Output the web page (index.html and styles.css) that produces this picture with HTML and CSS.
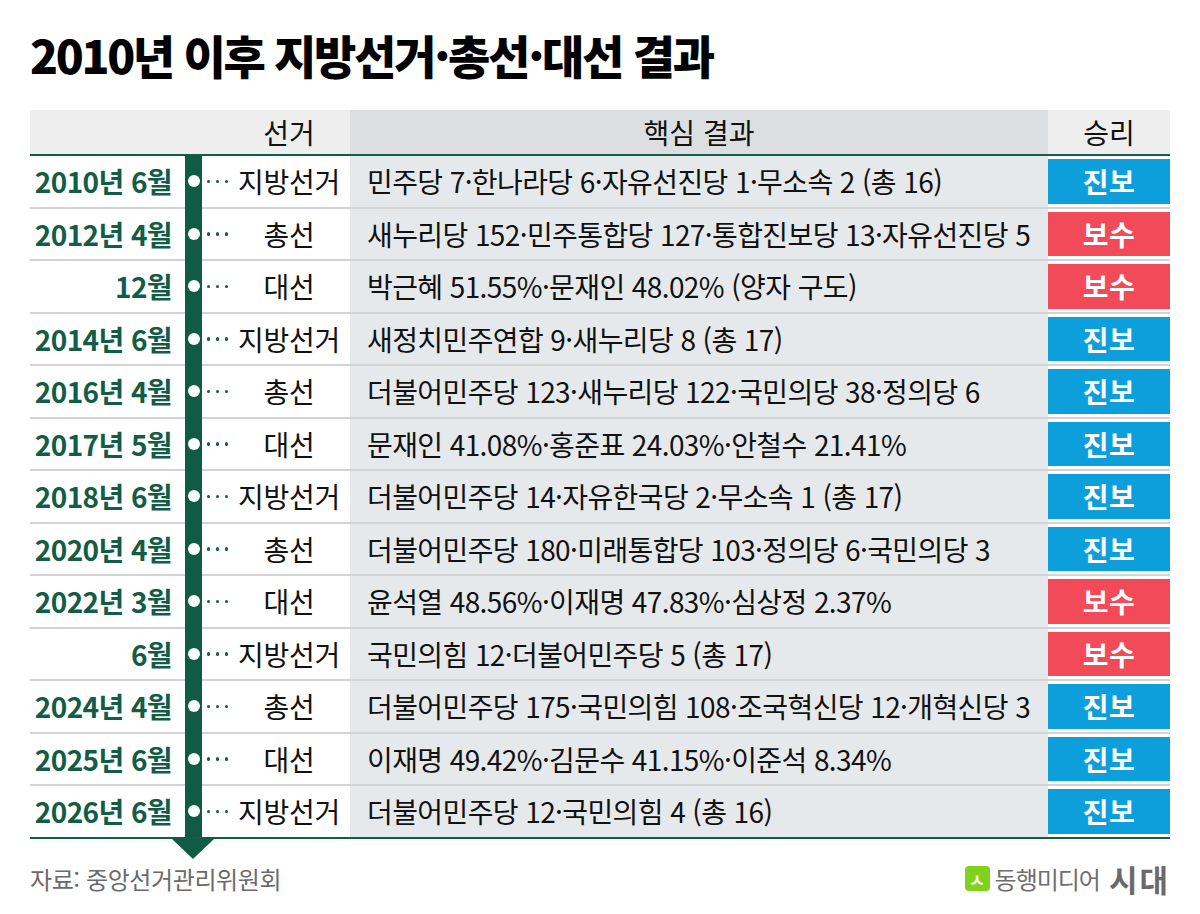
FILE: index.html
```html
<!DOCTYPE html>
<html lang="ko">
<head>
<meta charset="utf-8">
<title>2010년 이후 지방선거·총선·대선 결과</title>
<link rel="stylesheet" href="styles.css">
</head>
<body>
<div class="page">
  <h1 class="title">2010년 이후 지방선거·총선·대선 결과</h1>
  <div class="table">
    <div class="row head">
      <div class="hc side span3"></div>
      <div class="hc side">선거</div>
      <div class="hc mid">핵심 결과</div>
      <div class="hc side">승리</div>
    </div>

    <div class="row"><div class="date">2010년 6월</div><div class="bar"><i class="dot"></i></div><div class="dots"><i></i><i></i><i></i></div><div class="type">지방선거</div><div class="res">민주당 7·한나라당 6·자유선진당 1·무소속 2 (총 16)</div><div class="win"><span class="badge blue">진보</span></div></div>
    <div class="row"><div class="date">2012년 4월</div><div class="bar"><i class="dot"></i></div><div class="dots"><i></i><i></i><i></i></div><div class="type">총선</div><div class="res">새누리당 152·민주통합당 127·통합진보당 13·자유선진당 5</div><div class="win"><span class="badge red">보수</span></div></div>
    <div class="row"><div class="date">12월</div><div class="bar"><i class="dot"></i></div><div class="dots"><i></i><i></i><i></i></div><div class="type">대선</div><div class="res">박근혜 51.55%·문재인 48.02% (양자 구도)</div><div class="win"><span class="badge red">보수</span></div></div>
    <div class="row"><div class="date">2014년 6월</div><div class="bar"><i class="dot"></i></div><div class="dots"><i></i><i></i><i></i></div><div class="type">지방선거</div><div class="res">새정치민주연합 9·새누리당 8 (총 17)</div><div class="win"><span class="badge blue">진보</span></div></div>
    <div class="row"><div class="date">2016년 4월</div><div class="bar"><i class="dot"></i></div><div class="dots"><i></i><i></i><i></i></div><div class="type">총선</div><div class="res">더불어민주당 123·새누리당 122·국민의당 38·정의당 6</div><div class="win"><span class="badge blue">진보</span></div></div>
    <div class="row"><div class="date">2017년 5월</div><div class="bar"><i class="dot"></i></div><div class="dots"><i></i><i></i><i></i></div><div class="type">대선</div><div class="res">문재인 41.08%·홍준표 24.03%·안철수 21.41%</div><div class="win"><span class="badge blue">진보</span></div></div>
    <div class="row"><div class="date">2018년 6월</div><div class="bar"><i class="dot"></i></div><div class="dots"><i></i><i></i><i></i></div><div class="type">지방선거</div><div class="res">더불어민주당 14·자유한국당 2·무소속 1 (총 17)</div><div class="win"><span class="badge blue">진보</span></div></div>
    <div class="row"><div class="date">2020년 4월</div><div class="bar"><i class="dot"></i></div><div class="dots"><i></i><i></i><i></i></div><div class="type">총선</div><div class="res">더불어민주당 180·미래통합당 103·정의당 6·국민의당 3</div><div class="win"><span class="badge blue">진보</span></div></div>
    <div class="row"><div class="date">2022년 3월</div><div class="bar"><i class="dot"></i></div><div class="dots"><i></i><i></i><i></i></div><div class="type">대선</div><div class="res">윤석열 48.56%·이재명 47.83%·심상정 2.37%</div><div class="win"><span class="badge red">보수</span></div></div>
    <div class="row"><div class="date">6월</div><div class="bar"><i class="dot"></i></div><div class="dots"><i></i><i></i><i></i></div><div class="type">지방선거</div><div class="res">국민의힘 12·더불어민주당 5 (총 17)</div><div class="win"><span class="badge red">보수</span></div></div>
    <div class="row"><div class="date">2024년 4월</div><div class="bar"><i class="dot"></i></div><div class="dots"><i></i><i></i><i></i></div><div class="type">총선</div><div class="res">더불어민주당 175·국민의힘 108·조국혁신당 12·개혁신당 3</div><div class="win"><span class="badge blue">진보</span></div></div>
    <div class="row"><div class="date">2025년 6월</div><div class="bar"><i class="dot"></i></div><div class="dots"><i></i><i></i><i></i></div><div class="type">대선</div><div class="res">이재명 49.42%·김문수 41.15%·이준석 8.34%</div><div class="win"><span class="badge blue">진보</span></div></div>
    <div class="row last"><div class="date">2026년 6월</div><div class="bar"><i class="dot"></i></div><div class="dots"><i></i><i></i><i></i></div><div class="type">지방선거</div><div class="res">더불어민주당 12·국민의힘 4 (총 16)</div><div class="win"><span class="badge blue">진보</span></div></div>
  </div>
  <div class="arrow"></div>
  <div class="footer">
    <div class="source">자료: 중앙선거관리위원회</div>
    <div class="logo"><span class="mark">ㅅ</span><span class="brand">동행미디어</span><span class="brand-b">시대</span></div>
  </div>
</div>
</body>
</html>
```

FILE: styles.css
```css
* { box-sizing: border-box; }
html, body { margin: 0; padding: 0; background: #fff; }
body {
  font-family: "Noto Sans CJK KR", "Noto Sans", sans-serif;
  color: #111;
}
.page {
  width: 1200px;
  height: 914px;
  padding: 0 30px;
  overflow: hidden;
}
.title {
  margin: 0;
  padding-top: 24px;
  height: 110px;
  font-size: 46px;
  line-height: 60px;
  font-weight: 900;
  letter-spacing: -2.3px;
  color: #000;
}
.row {
  display: grid;
  grid-template-columns: 155px 17px 26px 122px 698px 122px;
  height: 52.5px;
}
.row > div {
  border-bottom: 2px solid #d3d3d3;
  display: flex;
  align-items: center;
}
.row.head { height: 46px; }
.row.head > div {
  border-bottom: 2px solid #135c45;
  justify-content: center;
  font-size: 28px;
  color: #111;
}
.hc.span3 { grid-column: span 3; }
.hc.side { background: #eeeeee; }
.hc.mid { background: #dcdfe2; }
.row.last > div { border-bottom-color: #135c45; }

.date {
  justify-content: flex-end;
  padding-right: 13px;
  font-size: 28px;
  font-weight: 700;
  letter-spacing: -0.6px;
  color: #135c45;
}
.row > .bar {
  background: #0f5b44;
  border-bottom-color: #0f5b44;
  justify-content: center;
}
.dot {
  display: block;
  width: 12px;
  height: 12px;
  border-radius: 50%;
  background: #fff;
}
.dots {
  gap: 5.5px;
  padding-left: 5px;
}
.dots i {
  display: block;
  width: 3.5px;
  height: 3.5px;
  border-radius: 50%;
  background: #135c45;
}
.type {
  justify-content: center;
  font-size: 28px;
  letter-spacing: -0.2px;
}
.res {
  background: #e6e9ec;
  padding-left: 17px;
  font-size: 28px;
  letter-spacing: -0.6px;
  white-space: nowrap;
}
.win { padding: 3px 0 3px; }
.badge {
  display: flex;
  width: 100%;
  height: 100%;
  align-items: center;
  justify-content: center;
  color: #fff;
  font-size: 28px;
  font-weight: 700;
  letter-spacing: 0.5px;
}
.badge.blue { background: #0d9fdc; }
.badge.red { background: #f24a58; }

.arrow {
  width: 0;
  height: 0;
  margin-left: 142px;
  border-left: 21px solid transparent;
  border-right: 21px solid transparent;
  border-top: 20px solid #0f5b44;
}
.footer {
  display: flex;
  justify-content: space-between;
  align-items: center;
  height: 40px;
}
.source {
  font-size: 24px;
  color: #6a6a6a;
  letter-spacing: -0.4px;
}
.logo {
  display: flex;
  align-items: center;
  gap: 5px;
}
.mark {
  display: flex;
  align-items: center;
  justify-content: center;
  width: 25px;
  height: 25px;
  border-radius: 4px;
  background: #7fd320;
  color: #fff;
  font-size: 18px;
  font-weight: 700;
  line-height: 1;
}
.brand {
  font-size: 24px;
  color: #6e6e6e;
  letter-spacing: -1px;
}
.brand-b {
  font-size: 31px;
  font-weight: 700;
  color: #6a6a6a;
  letter-spacing: 2px;
  margin-left: 4px;
}
```
